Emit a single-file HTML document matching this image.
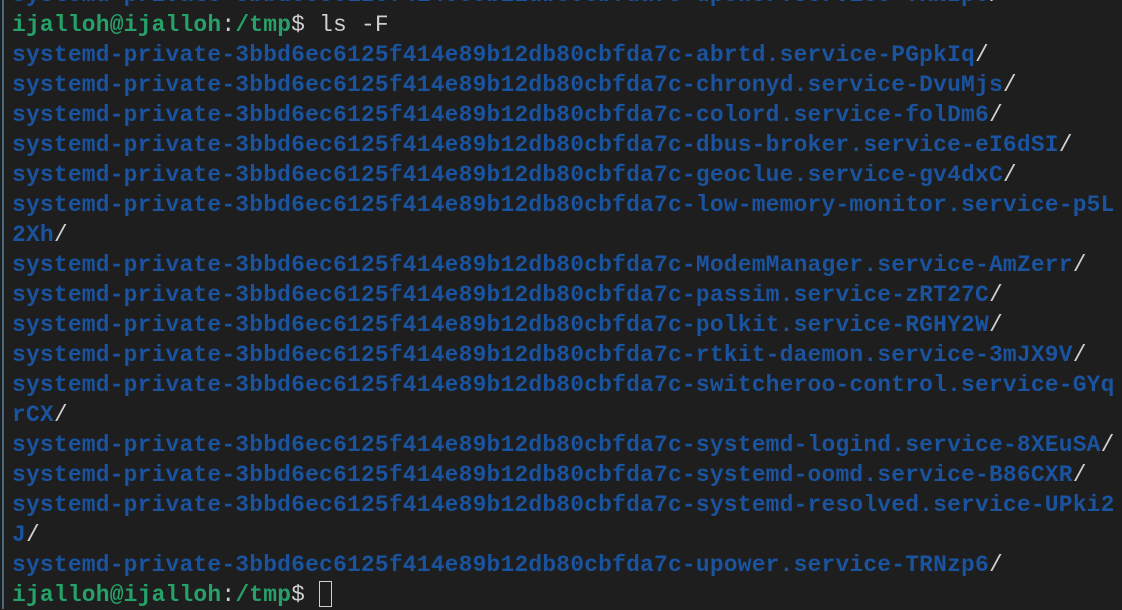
<!DOCTYPE html>
<html><head><meta charset="utf-8"><style>
html,body{margin:0;padding:0;background:#1e1e1e;width:1122px;height:609px;overflow:hidden}
#t{position:absolute;left:12px;top:-20px;font-family:"Liberation Mono","DejaVu Sans Mono",monospace;font-size:22.9px;letter-spacing:0.22px;line-height:30px;color:#d0d0d0;white-space:pre}
.b{color:#1a539f;font-weight:bold}
.g{color:#26a269;font-weight:bold}
.bar{position:absolute;left:2px;top:0;width:2px;height:609px;background:#4a6a80}
.cur{display:inline-block;width:13px;height:26px;border:1px solid #d0d0d0;vertical-align:-6px;box-sizing:border-box}
</style></head><body><div class="bar"></div><div id="t"><span class="b">systemd-private-3bbd6ec6125f414e89b12db80cbfda7c-upower.service-TRNzp6</span>/
<span class="g">ijalloh@ijalloh</span>:<span class="g">/tmp</span>$ ls -F
<span class="b">systemd-private-3bbd6ec6125f414e89b12db80cbfda7c-abrtd.service-PGpkIq</span>/
<span class="b">systemd-private-3bbd6ec6125f414e89b12db80cbfda7c-chronyd.service-DvuMjs</span>/
<span class="b">systemd-private-3bbd6ec6125f414e89b12db80cbfda7c-colord.service-folDm6</span>/
<span class="b">systemd-private-3bbd6ec6125f414e89b12db80cbfda7c-dbus-broker.service-eI6dSI</span>/
<span class="b">systemd-private-3bbd6ec6125f414e89b12db80cbfda7c-geoclue.service-gv4dxC</span>/
<span class="b">systemd-private-3bbd6ec6125f414e89b12db80cbfda7c-low-memory-monitor.service-p5L</span>
<span class="b">2Xh</span>/
<span class="b">systemd-private-3bbd6ec6125f414e89b12db80cbfda7c-ModemManager.service-AmZerr</span>/
<span class="b">systemd-private-3bbd6ec6125f414e89b12db80cbfda7c-passim.service-zRT27C</span>/
<span class="b">systemd-private-3bbd6ec6125f414e89b12db80cbfda7c-polkit.service-RGHY2W</span>/
<span class="b">systemd-private-3bbd6ec6125f414e89b12db80cbfda7c-rtkit-daemon.service-3mJX9V</span>/
<span class="b">systemd-private-3bbd6ec6125f414e89b12db80cbfda7c-switcheroo-control.service-GYq</span>
<span class="b">rCX</span>/
<span class="b">systemd-private-3bbd6ec6125f414e89b12db80cbfda7c-systemd-logind.service-8XEuSA</span>/
<span class="b">systemd-private-3bbd6ec6125f414e89b12db80cbfda7c-systemd-oomd.service-B86CXR</span>/
<span class="b">systemd-private-3bbd6ec6125f414e89b12db80cbfda7c-systemd-resolved.service-UPki2</span>
<span class="b">J</span>/
<span class="b">systemd-private-3bbd6ec6125f414e89b12db80cbfda7c-upower.service-TRNzp6</span>/
<span class="g">ijalloh@ijalloh</span>:<span class="g">/tmp</span>$ <span class="cur"></span></div></body></html>
